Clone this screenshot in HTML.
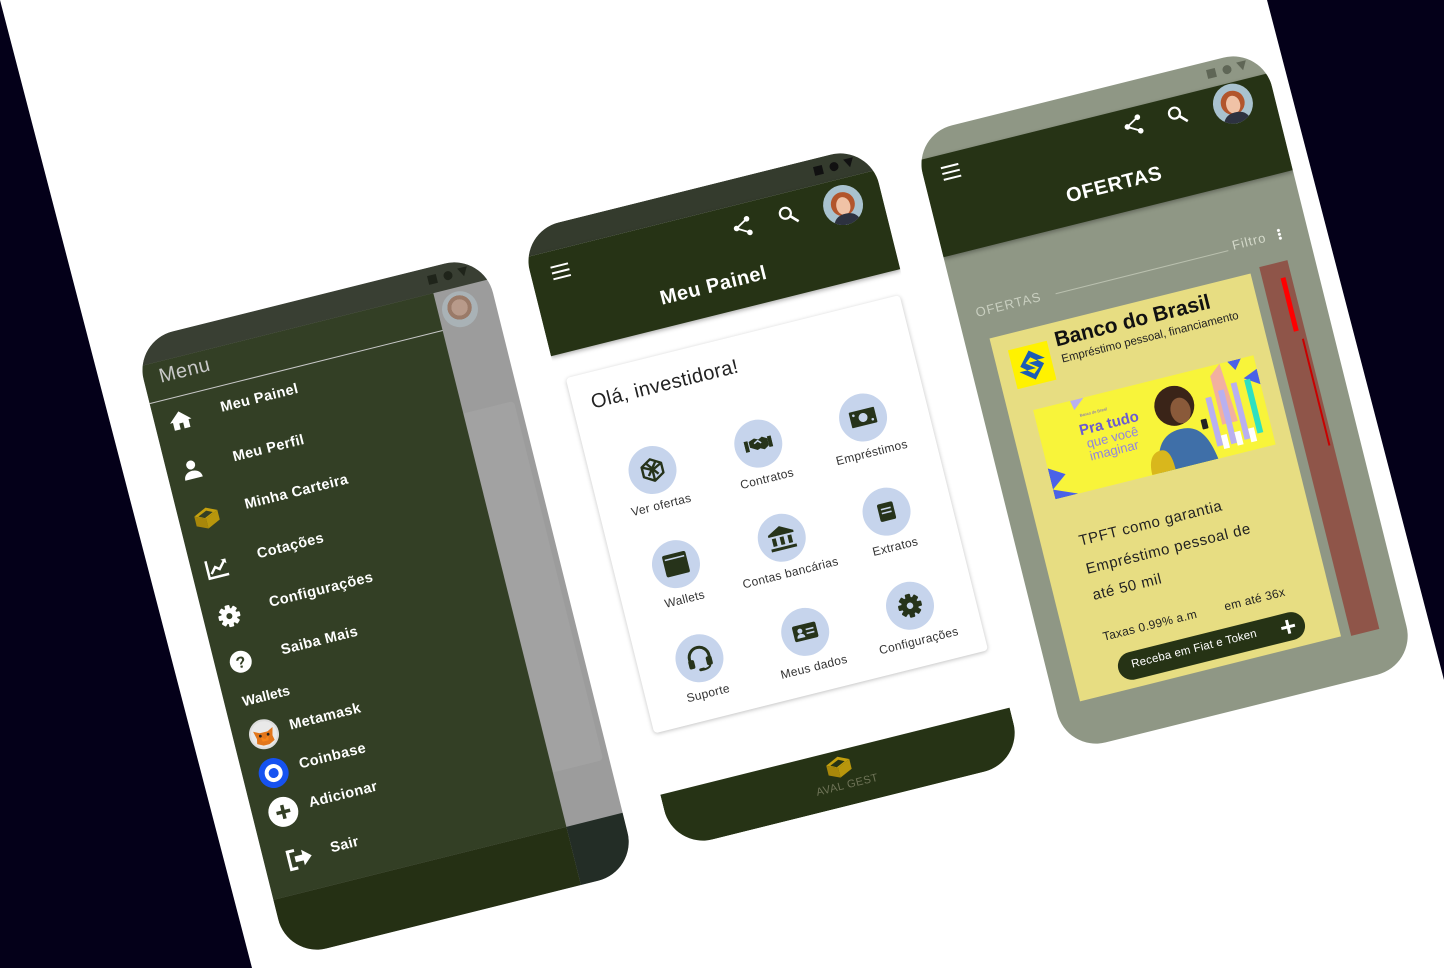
<!DOCTYPE html>
<html><head><meta charset="utf-8">
<style>
*{margin:0;padding:0;box-sizing:border-box}
body{width:1444px;height:968px;overflow:hidden;background:#040019;font-family:"Liberation Sans",sans-serif;position:relative}
.bg{position:absolute;left:0;top:0;width:1444px;height:968px}
.phone{position:absolute;left:0;top:0;width:360px;height:636px;transform-origin:0 0;border-radius:40px;overflow:hidden}
.abs{position:absolute}
.t{position:absolute;white-space:nowrap}
.circ{position:absolute;width:48px;height:48px;border-radius:50%;background:#c6d4ec;display:flex;align-items:center;justify-content:center}
.lbl{position:absolute;width:140px;text-align:center;font-size:12px;color:#333;letter-spacing:.3px}
.mi{position:absolute;left:68px;font-size:14.5px;color:#fff;font-weight:bold;letter-spacing:.4px;white-space:nowrap}
.ic{position:absolute;left:14px;width:24px;height:24px}
</style></head><body>
<svg class="bg" width="1444" height="968"><polygon points="0,0 1267,0 1444,680 1444,968 252,968" fill="#fff"/></svg>

<!-- LEFT PHONE -->
<div class="phone" style="transform:translate(134px,341px) rotate(-14deg);background:#9c9c9c">
  <div class="abs" style="left:0;top:0;width:360px;height:26px;background:#393f33"></div>
  <div class="abs" style="left:300px;top:8px;width:9px;height:9px;background:#1f241a"></div>
  <div class="abs" style="left:316px;top:8px;width:9px;height:9px;border-radius:50%;background:#1f241a"></div>
  <div class="abs" style="left:331px;top:8px;width:0;height:0;border-left:5px solid transparent;border-right:5px solid transparent;border-top:9px solid #1f241a"></div>
  <div class="abs" style="left:306px;top:30px;width:36px;height:36px;border-radius:50%;background:radial-gradient(circle at 50% 45%,#b89a8a 0 30%,#9a7a68 31% 45%,#a9b2b6 46%)"></div>
  <div class="abs" style="left:302px;top:150px;width:52px;height:370px;background:#a2a2a2;border-radius:0 4px 4px 0"></div>
  <div class="abs" style="left:0;top:26px;width:302px;height:550px;background:#333f25"></div>
  <div class="t" style="left:16px;top:30px;font-size:20px;color:#c9c9c9;letter-spacing:.5px">Menu</div>
  <div class="abs" style="left:0;top:64px;width:302px;height:1px;background:#c8c8c8"></div>
  <svg class="ic" style="top:76px" viewBox="0 0 24 24"><path d="M12 3L1 13h3v8h6v-6h4v6h6v-8h3z" fill="#fff"/></svg>
  <div class="mi" style="top:78px">Meu Painel</div>
  <svg class="ic" style="top:127px" viewBox="0 0 24 24"><circle cx="11" cy="7" r="4.5" fill="#fff"/><path d="M2 21c0-5 4-8 9-8s9 3 9 8z" fill="#fff"/></svg>
  <div class="mi" style="top:129px">Meu Perfil</div>
  <svg class="ic" style="top:176px;width:28px;height:26px" viewBox="0 0 28 26"><path d="M2 9l13-6 11 5-13 6z" fill="#c4a00e"/><path d="M2 9l11 5v10L2 19z" fill="#a8870a"/><path d="M13 14l13-6v10l-13 6z" fill="#b8960c"/><path d="M6 10l9-4 6 3-9 4z" fill="#333f25"/></svg>
  <div class="mi" style="top:178px">Minha Carteira</div>
  <svg class="ic" style="top:228px" viewBox="0 0 24 24"><path d="M2 3v18h20" stroke="#fff" stroke-width="2.5" fill="none"/><path d="M5 17l5-6 4 3 6-7" stroke="#fff" stroke-width="2.5" fill="none"/><path d="M17 5h5v5z" fill="#fff"/></svg>
  <div class="mi" style="top:229px">Cotações</div>
  <svg class="ic" style="top:278px" viewBox="0 0 24 24"><g fill="#fff" transform="translate(12 12)"><rect x="-2.5" y="-11" width="5" height="22" rx="1"/><rect x="-2.5" y="-11" width="5" height="22" rx="1" transform="rotate(45)"/><rect x="-2.5" y="-11" width="5" height="22" rx="1" transform="rotate(90)"/><rect x="-2.5" y="-11" width="5" height="22" rx="1" transform="rotate(135)"/><circle r="8"/><circle r="3" fill="#333f25"/></g></svg>
  <div class="mi" style="top:279px">Configurações</div>
  <svg class="ic" style="top:325px" viewBox="0 0 24 24"><circle cx="12" cy="12" r="11" fill="#fff"/><text x="12" y="18" text-anchor="middle" font-size="16" font-weight="bold" fill="#333f25" font-family="Liberation Sans">?</text></svg>
  <div class="mi" style="top:328px">Saiba Mais</div>
  <div class="t" style="left:18px;top:368px;font-size:14px;color:#fff;font-weight:bold">Wallets</div>
  <div class="abs" style="left:16px;top:398px;width:30px;height:30px;border-radius:50%;background:#e9e9e9;border:2px solid #ddd;overflow:hidden"><svg width="26" height="26" viewBox="0 0 26 26"><path d="M3 8l6 3h8l6-3-2 8 1 5-6 3h-6l-6-3 1-5z" fill="#e2761b"/><path d="M9 15l4 3 4-3-1 5h-6z" fill="#f6851b"/><circle cx="9" cy="14" r="1.4" fill="#222"/><circle cx="17" cy="14" r="1.4" fill="#222"/></svg></div>
  <div class="mi" style="left:58px;top:403px">Metamask</div>
  <div class="abs" style="left:16px;top:438px;width:30px;height:30px;border-radius:50%;background:#1652f0;display:flex;align-items:center;justify-content:center"><div style="width:18px;height:18px;border-radius:50%;border:4px solid #fff;background:#1652f0"></div></div>
  <div class="mi" style="left:58px;top:443px">Coinbase</div>
  <div class="abs" style="left:16px;top:478px;width:30px;height:30px;border-radius:50%;background:#fff"><svg width="30" height="30"><path d="M15 8v14M8 15h14" stroke="#333f25" stroke-width="3.5"/></svg></div>
  <div class="mi" style="left:58px;top:483px">Adicionar</div>
  <svg class="abs" style="left:22px;top:530px" width="28" height="24" viewBox="0 0 28 24"><path d="M10 3H3v18h7" stroke="#fff" stroke-width="3" fill="none"/><path d="M9 9h8V4l9 8-9 8v-5H9z" fill="#fff"/></svg>
  <div class="mi" style="top:532px">Sair</div>
  <div class="abs" style="left:0;top:576px;width:302px;height:60px;background:#253014"></div>
  <div class="abs" style="left:302px;top:576px;width:58px;height:60px;background:#232d26"></div>
</div>

<!-- MIDDLE PHONE -->
<div class="phone" style="transform:translate(520px,232px) rotate(-14deg);background:#fff">
  <div class="abs" style="left:0;top:0;width:360px;height:26px;background:#343b2d"></div>
  <div class="abs" style="left:300px;top:8px;width:9px;height:9px;background:#111"></div>
  <div class="abs" style="left:316px;top:8px;width:9px;height:9px;border-radius:50%;background:#111"></div>
  <div class="abs" style="left:331px;top:8px;width:0;height:0;border-left:5px solid transparent;border-right:5px solid transparent;border-top:9px solid #111"></div>
  <div class="abs" style="left:0;top:26px;width:360px;height:102px;background:#263315;box-shadow:0 2px 4px rgba(0,0,0,.3)"></div>
  <svg class="abs" style="left:20px;top:40px" width="20" height="16"><path d="M1 2h18M1 8h18M1 14h18" stroke="#fff" stroke-width="2"/></svg>
  <div class="t" style="left:120px;top:88px;font-size:20px;color:#fff;font-weight:bold;letter-spacing:.5px">Meu Painel</div>
  <svg class="abs" style="left:206px;top:38px" width="22" height="22" viewBox="0 0 22 22"><circle cx="17" cy="4" r="2.8" fill="#fff"/><circle cx="5" cy="11" r="2.8" fill="#fff"/><circle cx="17" cy="18" r="2.8" fill="#fff"/><path d="M17 4L5 11l12 7" stroke="#fff" stroke-width="1.8" fill="none"/></svg>
  <svg class="abs" style="left:254px;top:38px" width="22" height="22" viewBox="0 0 22 22"><circle cx="8" cy="8" r="5.5" stroke="#fff" stroke-width="2.2" fill="none"/><path d="M12 12l7 7" stroke="#fff" stroke-width="2.6"/></svg>
  <div class="abs" style="left:300px;top:32px;width:40px;height:40px;border-radius:50%;overflow:hidden;background:#a9c2cf"><svg width="40" height="40"><circle cx="20" cy="19" r="12" fill="#b2552c"/><ellipse cx="20" cy="21" rx="7" ry="9" fill="#f0c2a6"/><path d="M6 40c2-9 8-11 14-11s12 2 14 11z" fill="#2d3240"/></svg></div>
  <div class="abs" style="left:9px;top:153px;width:344px;height:366px;background:#fff;border-radius:4px;box-shadow:0 1px 4px rgba(0,0,0,.25)"></div>
  <div class="t" style="left:28px;top:172px;font-size:20px;color:#222;letter-spacing:.4px">Olá, investidora!</div>
  <div class="circ" style="left:47px;top:239px"><svg width="26" height="26" viewBox="0 0 26 26"><path d="M13 2l10 6v10l-10 6-10-6V8z M3 8l10 5 10-5 M13 13v11 M8 5l10 13 M18 5L8 18" stroke="#26331a" stroke-width="2.4" fill="none" stroke-linejoin="round"/></svg></div>
  <div class="lbl" style="left:1px;top:292px">Ver ofertas</div>
  <div class="circ" style="left:156px;top:239px"><svg width="28" height="20" viewBox="0 0 28 20"><rect x="0" y="5" width="4" height="11" fill="#26331a"/><rect x="24" y="5" width="4" height="11" fill="#26331a"/><path d="M5 6l6-2 4 2 4-2 5 3v7l-5 3-4-2-3 1-7-4z" fill="#26331a"/><path d="M10 9l4-2 3 3" stroke="#c6d4ec" stroke-width="1.5" fill="none"/></svg></div>
  <div class="lbl" style="left:110px;top:292px">Contratos</div>
  <div class="circ" style="left:264px;top:239px"><svg width="28" height="20" viewBox="0 0 28 20"><rect x="1" y="2" width="26" height="16" rx="1" fill="#26331a"/><circle cx="14" cy="10" r="4.5" fill="#c6d4ec"/><circle cx="5" cy="6" r="1.3" fill="#c6d4ec"/><circle cx="23" cy="14" r="1.3" fill="#c6d4ec"/></svg></div>
  <div class="lbl" style="left:218px;top:292px">Empréstimos</div>
  <div class="circ" style="left:47px;top:336px"><svg width="26" height="24" viewBox="0 0 26 24"><rect x="1" y="1" width="24" height="22" rx="2" fill="#26331a"/><rect x="3" y="5" width="20" height="1.5" fill="#c6d4ec"/></svg></div>
  <div class="lbl" style="left:1px;top:389px">Wallets</div>
  <div class="circ" style="left:156px;top:336px"><svg width="28" height="26" viewBox="0 0 28 26"><path d="M14 1L1 8v2h26V8z" fill="#26331a"/><rect x="4" y="12" width="4" height="8" fill="#26331a"/><rect x="12" y="12" width="4" height="8" fill="#26331a"/><rect x="20" y="12" width="4" height="8" fill="#26331a"/><rect x="1" y="22" width="26" height="3" fill="#26331a"/></svg></div>
  <div class="lbl" style="left:110px;top:389px">Contas bancárias</div>
  <div class="circ" style="left:264px;top:336px"><svg width="18" height="20" viewBox="0 0 18 20"><rect x="1" y="1" width="16" height="18" rx="2" fill="#26331a"/><rect x="4" y="6" width="10" height="1.6" fill="#c6d4ec"/><rect x="4" y="10" width="10" height="1.6" fill="#c6d4ec"/></svg></div>
  <div class="lbl" style="left:218px;top:389px">Extratos</div>
  <div class="circ" style="left:47px;top:433px"><svg width="28" height="28" viewBox="0 0 28 28"><path d="M4 16v-3a10 10 0 0120 0v3" stroke="#26331a" stroke-width="3" fill="none"/><rect x="2" y="14" width="6" height="9" rx="2" fill="#26331a"/><rect x="20" y="14" width="6" height="9" rx="2" fill="#26331a"/><path d="M23 22c0 3-4 4-8 4" stroke="#26331a" stroke-width="2" fill="none"/><rect x="11" y="24" width="6" height="3" rx="1.5" fill="#26331a"/></svg></div>
  <div class="lbl" style="left:1px;top:486px">Suporte</div>
  <div class="circ" style="left:156px;top:433px"><svg width="26" height="20" viewBox="0 0 26 20"><rect x="1" y="2" width="24" height="16" rx="2" fill="#26331a"/><circle cx="8" cy="8" r="2.5" fill="#c6d4ec"/><path d="M4 15c0-3 2-4 4-4s4 1 4 4z" fill="#c6d4ec"/><rect x="14" y="7" width="8" height="1.6" fill="#c6d4ec"/><rect x="14" y="11" width="8" height="1.6" fill="#c6d4ec"/></svg></div>
  <div class="lbl" style="left:110px;top:486px">Meus dados</div>
  <div class="circ" style="left:264px;top:433px"><svg width="26" height="26" viewBox="0 0 24 24"><g fill="#26331a" transform="translate(12 12)"><rect x="-2.5" y="-11" width="5" height="22" rx="1"/><rect x="-2.5" y="-11" width="5" height="22" rx="1" transform="rotate(45)"/><rect x="-2.5" y="-11" width="5" height="22" rx="1" transform="rotate(90)"/><rect x="-2.5" y="-11" width="5" height="22" rx="1" transform="rotate(135)"/><circle r="8"/><circle r="3" fill="#c6d4ec"/></g></svg></div>
  <div class="lbl" style="left:218px;top:486px">Configurações</div>
  <div class="abs" style="left:0;top:580px;width:360px;height:56px;background:#263315"></div>
  <svg class="abs" style="left:166px;top:584px" width="28" height="24" viewBox="0 0 28 24"><path d="M2 8l13-6 11 5-13 6z" fill="#c4a00e"/><path d="M2 8l11 5v10L2 18z" fill="#a8870a"/><path d="M13 13l13-6v10l-13 6z" fill="#b8960c"/><path d="M6 9l9-4 6 3-9 4z" fill="#263315"/></svg>
  <div class="t" style="left:152px;top:610px;font-size:11px;color:#6f7458;letter-spacing:.5px">AVAL GEST</div>
</div>

<!-- RIGHT PHONE -->
<div class="phone" style="transform:translate(913px,135px) rotate(-14deg);background:#8f9785">
  <div class="abs" style="left:300px;top:8px;width:9px;height:9px;background:#5f6656"></div>
  <div class="abs" style="left:316px;top:8px;width:9px;height:9px;border-radius:50%;background:#5f6656"></div>
  <div class="abs" style="left:331px;top:8px;width:0;height:0;border-left:5px solid transparent;border-right:5px solid transparent;border-top:9px solid #5f6656"></div>
  <div class="abs" style="left:0;top:26px;width:360px;height:100px;background:#263315;box-shadow:0 2px 4px rgba(0,0,0,.3)"></div>
  <svg class="abs" style="left:18px;top:37px" width="20" height="16"><path d="M1 2h18M1 8h18M1 14h18" stroke="#fff" stroke-width="2"/></svg>
  <div class="t" style="left:134px;top:86px;font-size:20px;color:#fff;font-weight:bold;letter-spacing:.6px">OFERTAS</div>
  <svg class="abs" style="left:205px;top:33px" width="22" height="22" viewBox="0 0 22 22"><circle cx="17" cy="4" r="2.8" fill="#fff"/><circle cx="5" cy="11" r="2.8" fill="#fff"/><circle cx="17" cy="18" r="2.8" fill="#fff"/><path d="M17 4L5 11l12 7" stroke="#fff" stroke-width="1.8" fill="none"/></svg>
  <svg class="abs" style="left:251px;top:34px" width="22" height="22" viewBox="0 0 22 22"><circle cx="8" cy="8" r="5.5" stroke="#fff" stroke-width="2.2" fill="none"/><path d="M12 12l7 7" stroke="#fff" stroke-width="2.6"/></svg>
  <div class="abs" style="left:298px;top:27px;width:40px;height:40px;border-radius:50%;overflow:hidden;background:#a9c2cf"><svg width="40" height="40"><circle cx="20" cy="19" r="12" fill="#b2552c"/><ellipse cx="20" cy="21" rx="7" ry="9" fill="#f0c2a6"/><path d="M6 40c2-9 8-11 14-11s12 2 14 11z" fill="#2d3240"/></svg></div>
  <div class="t" style="left:18px;top:180px;font-size:13px;color:#c9cfc0;letter-spacing:1px">OFERTAS</div>
  <div class="abs" style="left:100px;top:188px;width:178px;height:1px;background:#b9bfae"></div>
  <div class="t" style="left:283px;top:177px;font-size:13px;color:#d5dacb;letter-spacing:1px">Filtro</div>
  <div class="abs" style="left:330px;top:179px;width:3px;height:12px;background:radial-gradient(circle,#fff 1.4px,transparent 1.6px) 0 0/3px 4px"></div>
  <div class="abs" style="left:25px;top:216px;width:269px;height:374px;background:#e7dd82"></div>
  <div class="abs" style="left:40px;top:232px;width:40px;height:40px;background:#fff200"><svg width="40" height="40" viewBox="0 0 40 40"><path d="M20 5l14 11-8 0 6 5-12 14-14-11 8 0-6-5z" fill="#1b5cb5"/><path d="M20 12l6 5h-9l9 7-6 5-6-5h9l-9-7z" fill="#fff200"/></svg></div>
  <div class="t" style="left:88px;top:222px;font-size:21px;color:#111;font-weight:bold">Banco do Brasil</div>
  <div class="t" style="left:90px;top:248px;font-size:11.5px;color:#222">Empréstimo pessoal, financiamento</div>
  <div class="abs" style="left:50px;top:296px;width:227px;height:92px;background:#f8f43a;overflow:hidden">
    <svg width="227" height="92"><polygon points="0,60 16,70 0,82" fill="#4a62e8"/><polygon points="0,82 24,92 0,92" fill="#4a62e8"/><polygon points="38,0 52,0 40,10" fill="#b9b0f0"/><polygon points="200,0 214,0 206,10" fill="#4a62e8"/><polygon points="212,20 227,14 227,30" fill="#4a62e8"/><polygon points="180,10 192,0 196,60 180,60" fill="#f2b0a0"/>
    <g fill="#b9b0f0"><rect x="170" y="30" width="6" height="50"/><rect x="184" y="26" width="6" height="55"/><rect x="198" y="22" width="6" height="58"/></g><rect x="212" y="22" width="6" height="55" fill="#2fe0c0"/><g fill="#fff"><rect x="176" y="70" width="6" height="14"/><rect x="190" y="70" width="6" height="14"/><rect x="204" y="70" width="6" height="14"/></g>
    <path d="M108 92c2-26 12-38 30-38s26 12 30 38z" fill="#3f6fa8"/><circle cx="138" cy="30" r="20" fill="#3a2418"/><ellipse cx="143" cy="36" rx="10" ry="13" fill="#8a5a3a"/><rect x="160" y="50" width="6" height="10" rx="1" fill="#222"/><path d="M100 92c0-16 6-22 14-22s10 10 10 22z" fill="#d9b71c"/></svg>
    <div class="t" style="left:44px;top:14px;font-size:4px;color:#6b5bd1">Banco do Brasil</div>
    <div class="t" style="left:40px;top:24px;font-size:15px;color:#6b5bd1;font-weight:bold;line-height:15px">Pra tudo</div>
    <div class="t" style="left:44px;top:39px;font-size:13px;color:#8f83e0;line-height:13px">que você<br>imaginar</div>
  </div>
  <div class="t" style="left:63px;top:426px;font-size:15px;color:#222;letter-spacing:.6px">TPFT como garantia</div>
  <div class="t" style="left:63px;top:455px;font-size:15px;color:#222;letter-spacing:.6px">Empréstimo pessoal de</div>
  <div class="t" style="left:63px;top:482px;font-size:15px;color:#222;letter-spacing:.6px">até 50 mil</div>
  <div class="t" style="left:63px;top:526px;font-size:12px;color:#222;letter-spacing:.3px">Taxas 0.99% a.m</div>
  <div class="t" style="left:188px;top:526px;font-size:12px;color:#222;letter-spacing:.3px">em até 36x</div>
  <div class="abs" style="left:70px;top:554px;width:192px;height:28px;border-radius:14px;background:#263315"></div>
  <div class="t" style="left:84px;top:561px;font-size:11.5px;color:#fff;letter-spacing:.2px">Receba em Fiat e Token</div>
  <svg class="abs" style="left:236px;top:559px" width="18" height="18"><path d="M9 2v14M2 9h14" stroke="#fff" stroke-width="3"/></svg>
  <div class="abs" style="left:304px;top:212px;width:29px;height:380px;background:#8f5549"></div>
  <div class="abs" style="left:322px;top:228px;width:5px;height:55px;background:#ff0000"></div>
  <div class="abs" style="left:328px;top:292px;width:2px;height:110px;background:#c80000"></div>
</div>
</body></html>
